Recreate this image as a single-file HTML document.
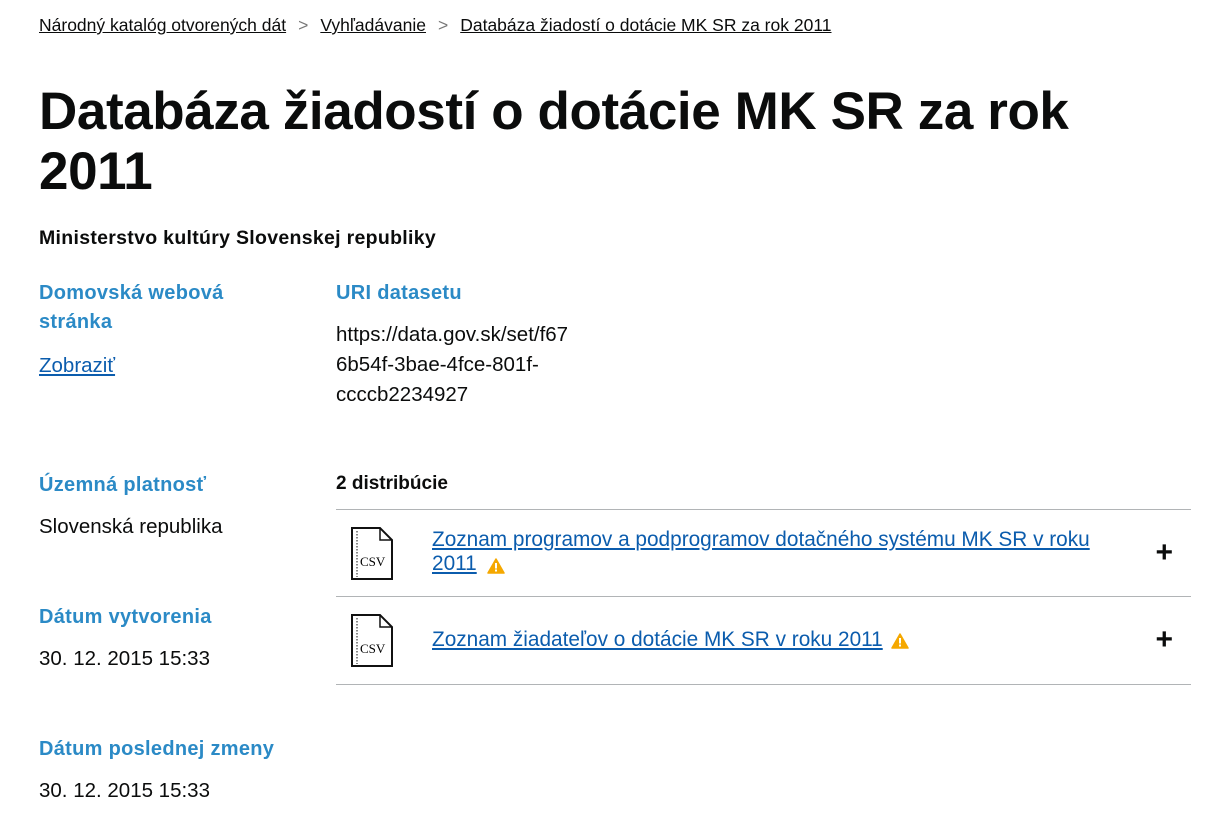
<!DOCTYPE html>
<html><head><meta charset="utf-8"><style>
body{margin:0;background:#fff;font-family:"Liberation Sans",sans-serif;color:#0b0c0c;}
.a{position:absolute;white-space:nowrap;}
.bc{top:15px;left:39px;font-size:17.5px;}
.bc a{color:#0b0c0c;text-decoration:underline;}
.bc span.s{color:#777;margin:0 12px;}
h1{position:absolute;left:39px;top:82px;margin:0;font-size:53px;line-height:60px;font-weight:bold;letter-spacing:-0.4px;}
.lab{color:#2b8ac6;font-weight:bold;font-size:20px;line-height:29px;letter-spacing:0.3px;}
.t{font-size:20.5px;line-height:30px;}
.lnk{color:#0b5cad;text-decoration:underline;}
.row{position:absolute;left:336px;width:855px;border-top:1px solid #b1b4b6;}
.plus{position:absolute;right:18px;font-size:30px;font-weight:bold;}
.w{display:inline-block;vertical-align:-1px;margin-left:6px;}
</style></head><body>
<div class="a bc"><a>Národný katalóg otvorených dát</a><span class="s">&gt;</span><a>Vyhľadávanie</a><span class="s">&gt;</span><a>Databáza žiadostí o dotácie MK SR za rok 2011</a></div>
<h1>Databáza žiadostí o dotácie MK SR za rok<br>2011</h1>
<div class="a" style="left:39px;top:227px;font-size:19.5px;font-weight:bold;letter-spacing:0.3px">Ministerstvo kultúry Slovenskej republiky</div>
<div class="a lab" style="left:39px;top:279px">Domovská webová<br>stránka</div>
<div class="a t lnk" style="left:39px;top:351px">Zobraziť</div>
<div class="a lab" style="left:336px;top:279px">URI datasetu</div>
<div class="a t" style="left:336px;top:320px">https://data.gov.sk/set/f67<br>6b54f-3bae-4fce-801f-<br>ccccb2234927</div>
<div class="a lab" style="left:39px;top:471px">Územná platnosť</div>
<div class="a t" style="left:39px;top:512px">Slovenská republika</div>
<div class="a lab" style="left:39px;top:603px">Dátum vytvorenia</div>
<div class="a t" style="left:39px;top:644px">30. 12. 2015 15:33</div>
<div class="a lab" style="left:39px;top:735px">Dátum poslednej zmeny</div>
<div class="a t" style="left:39px;top:776px">30. 12. 2015 15:33</div>
<div class="a" style="left:336px;top:473px;font-size:19px;font-weight:bold">2 distribúcie</div>
<div class="row" style="top:509px;height:87px">
 <svg style="position:absolute;left:14px;top:17px" width="44" height="54" viewBox="0 0 44 54"><path d="M2 1H30L42 13V52H2Z" fill="#fff" stroke="#111" stroke-width="2"/><path d="M30 1V13H42" fill="none" stroke="#111" stroke-width="1.5"/><path d="M7 4V50" stroke="#111" stroke-dasharray="1.5 1.5"/><text x="10" y="39" font-family="Liberation Serif" font-size="13">CSV</text></svg>
 <div class="a t lnk" style="left:96px;top:18px;line-height:24px;font-size:20.8px">Zoznam programov a podprogramov dotačného systému MK SR v roku<br>2011</div>
 <svg class="a" style="left:151px;top:48px" width="18" height="16" viewBox="0 0 18 16"><path d="M9 1L17 15H1Z" fill="#f5a800" stroke="#f5a800" stroke-linejoin="round" stroke-width="1.5"/><rect x="8" y="5" width="2" height="5.5" fill="#fff"/><rect x="8" y="11.5" width="2" height="2" fill="#fff"/></svg>
 <div class="plus" style="top:26px">+</div>
</div>
<div class="row" style="top:596px;height:87px;border-bottom:1px solid #b1b4b6">
 <svg style="position:absolute;left:14px;top:17px" width="44" height="54" viewBox="0 0 44 54"><path d="M2 1H30L42 13V52H2Z" fill="#fff" stroke="#111" stroke-width="2"/><path d="M30 1V13H42" fill="none" stroke="#111" stroke-width="1.5"/><path d="M7 4V50" stroke="#111" stroke-dasharray="1.5 1.5"/><text x="10" y="39" font-family="Liberation Serif" font-size="13">CSV</text></svg>
 <div class="a t lnk" style="left:96px;top:31px;line-height:24px;font-size:20.8px">Zoznam žiadateľov o dotácie MK SR v roku 2011</div>
 <svg class="a" style="left:555px;top:36px" width="18" height="16" viewBox="0 0 18 16"><path d="M9 1L17 15H1Z" fill="#f5a800" stroke="#f5a800" stroke-linejoin="round" stroke-width="1.5"/><rect x="8" y="5" width="2" height="5.5" fill="#fff"/><rect x="8" y="11.5" width="2" height="2" fill="#fff"/></svg>
 <div class="plus" style="top:26px">+</div>
</div>
</body></html>
